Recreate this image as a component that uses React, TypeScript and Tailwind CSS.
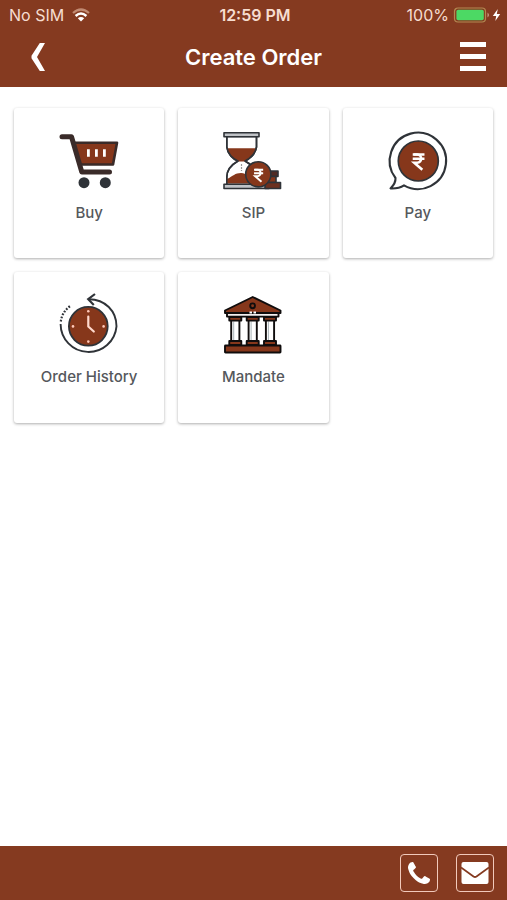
import type { ReactNode } from "react";

const RUST = "#853a20";
const INK = "#2f3338";
const SAND = "#86371b";

function CartIcon() {
  return (
    <svg viewBox="0 0 60 60" className="size-15 overflow-visible" aria-hidden="true">
      <path d="M15 11.8H58L54 33.5H20.5Z" fill={SAND} stroke="#3a2b29" strokeWidth="2.6" strokeLinejoin="round" />
      <path d="M3 5.8H12.5L22.8 41H50.5" fill="none" stroke="#3a2b29" strokeWidth="5" strokeLinecap="round" strokeLinejoin="round" />
      <path d="M29.4 18.3V25.8M37.4 18.3V25.8M45.4 18.3V25.8" stroke="#fff" strokeWidth="2.8" />
      <circle cx="25" cy="51.7" r="5.5" fill={INK} />
      <circle cx="46.3" cy="51.7" r="5.5" fill={INK} />
    </svg>
  );
}

function Rupee({ x, y, scale }: { x: number; y: number; scale: number }) {
  return (
    <g transform={`translate(${x} ${y}) scale(${scale})`} fill="none" stroke="#fff" strokeWidth="2.6">
      <path d="M-6-7.2H6M-6-2.8H6" />
      <path d="M-5-7.2H-1.5C4-7.2 4 1.2-1.5 1.2H-4.5L3.8 8.5" />
    </g>
  );
}

function HourglassIcon() {
  return (
    <svg viewBox="0 0 60 60" className="size-15 overflow-visible" aria-hidden="true">
      <g stroke={INK} strokeWidth="1.6" strokeLinejoin="round">
        <path d="M3.8 5.5V16C4.5 23 10 28 15 30C8 34 3.8 40 3.8 46V53.5H33.5V46C33.5 40 29 34 22 30C28 27 32.5 22 33.5 16V5.5Z" fill="#fff" />
        <path d="M3.9 17.3H33.4C32 24 27 28 21 30.5H16C10 28 5 24 3.9 17.3Z" fill={SAND} stroke="none" />
        <path d="M4 52.5V48C10 45 12 42 18 42C24 42 28 48 33 52.5Z" fill={SAND} stroke="none" />
        <path d="M18.5 33V40" stroke="#999" strokeWidth="1.2" strokeDasharray="2 1" />
        <path d="M3.8 5.5V16C4.5 23 10 28 15 30C8 34 3.8 40 3.8 46V53.5M33.5 5.5V16C32.5 22 28 27 22 30C25 31.5 27 33 29 35" fill="none" />
        <rect x="1" y="1.7" width="35" height="4" fill="#bfc2c6" />
        <rect x="1" y="53.3" width="45" height="4.2" fill="#bfc2c6" />
        <rect x="43" y="40" width="12" height="5.5" fill="#502b25" />
        <rect x="42" y="45.5" width="11" height="6" fill={SAND} />
        <rect x="42" y="51.5" width="15.5" height="6" fill="#6d301f" />
        <circle cx="35.3" cy="43.3" r="12.6" fill={SAND} />
      </g>
      <Rupee x={35.6} y={44.3} scale={0.76} />
    </svg>
  );
}

function PayIcon() {
  return (
    <svg viewBox="0 0 60 60" className="size-15 overflow-visible" aria-hidden="true">
      <path d="M7.5 47A28.2 28.2 0 1 1 16 54.4C12 57 7 57.6 2.5 57.4C6 54 7.8 51 7.5 47Z" fill="#fff" stroke={INK} strokeWidth="2.1" strokeLinejoin="round" />
      <circle cx="30.3" cy="30" r="20" fill={SAND} stroke={INK} strokeWidth="1.7" />
      <Rupee x={30.6} y={30.5} scale={0.98} />
    </svg>
  );
}

function HistoryIcon() {
  return (
    <svg viewBox="0 0 60 60" className="size-15 overflow-visible" aria-hidden="true">
      <g fill="none" stroke={INK} strokeWidth="1.9">
        <path d="M30 4.2C46 4.2 57.5 16 57.5 31.3A28 28 0 0 1 1.6 29" />
        <path d="M36 -1L29.2 4.2L34.8 10" strokeWidth="2.2" />
        <path d="M1.8 26.5C2.6 20 6 14.5 12 10.5" strokeWidth="2.2" strokeDasharray="1.8 1.5" />
      </g>
      <circle cx="29.3" cy="31.3" r="19.4" fill={SAND} stroke={INK} strokeWidth="1.8" />
      <path d="M29.3 21.5V31.5L34.8 36.5" fill="none" stroke="#ffd9cd" strokeWidth="2.2" strokeLinecap="round" strokeLinejoin="round" />
      <g fill="#ffc9ba">
        <circle cx="29.3" cy="16.3" r="1.3" />
        <circle cx="29.3" cy="46.6" r="1.3" />
        <circle cx="14" cy="31.4" r="1.3" />
        <circle cx="44.6" cy="31.4" r="1.3" />
      </g>
    </svg>
  );
}

function BankIcon() {
  return (
    <svg viewBox="0 0 60 60" className="size-15 overflow-visible" aria-hidden="true">
      <g stroke="#100d0d" strokeWidth="1.9" strokeLinejoin="round">
        <rect x="4" y="18" width="51.5" height="3.6" fill="#f3eeee" />
        <path d="M29.7 2L57.5 15.5V18H2V15.5Z" fill={SAND} />
        <circle cx="29.6" cy="10.8" r="2.4" fill={SAND} />
        {[6.3, 23.7, 41].map((x) => (
          <g key={x}>
            <rect x={x + 1.9} y="25" width="8.2" height="21" fill="#fff" />
            <path d={`M${x + 4.4} 26.5V45`} strokeWidth="1" stroke="#a9b4b8" />
            <rect x={x} y="22" width="12" height="3.6" fill={SAND} />
            <rect x={x} y="46" width="12" height="4" fill={SAND} />
          </g>
        ))}
        <rect x="2" y="50.5" width="55.5" height="7" rx="0.5" fill={SAND} />
      </g>
      <path d="M26.5 17.6H29M30.5 17.6H33" stroke="#fff" strokeWidth="2" />
    </svg>
  );
}

const tiles: { label: string; icon: ReactNode }[] = [
  { label: "Buy", icon: <CartIcon /> },
  { label: "SIP", icon: <HourglassIcon /> },
  { label: "Pay", icon: <PayIcon /> },
  { label: "Order History", icon: <HistoryIcon /> },
  { label: "Mandate", icon: <BankIcon /> },
];

function StatusBar() {
  return (
    <div className="grid h-[26px] grid-cols-[1fr_auto_1fr] items-center pt-1 pr-1.5 pl-[9px] text-base leading-5 text-[#f6ddd0]">
      <div className="flex items-center gap-2">
        <span>No SIM</span>
        <svg viewBox="0 0 18 14" className="h-3.5 w-4.5" aria-label="Wi-Fi">
          <path d="M1 5Q9-2 17 5" fill="none" stroke="#c18a72" strokeWidth="2.2" />
          <path d="M3.6 8Q9 3 14.4 8" fill="none" stroke="#fff" strokeWidth="2.4" />
          <path d="M5.8 10.2Q9 7.6 12.2 10.2L9 13.6Z" fill="#fff" />
        </svg>
      </div>
      <span className="font-semibold">12:59 PM</span>
      <div className="flex items-center justify-end gap-1">
        <span>100%</span>
        <svg viewBox="0 0 48 16" className="h-4 w-12" aria-label="Battery charging">
          <rect x="1.5" y="1" width="31" height="14" rx="3.5" fill="none" stroke="#b28a52" strokeWidth="1.2" />
          <rect x="3.4" y="2.8" width="27.4" height="10.4" rx="1.8" fill="#4cd964" />
          <path d="M34.5 5.5Q37.5 8 34.5 10.5Z" fill="#c99a84" />
          <path d="M44.8 2L39.8 9H43.2L42.3 14L47.2 7H43.8Z" fill="#fff" />
        </svg>
      </div>
    </div>
  );
}

export default function App() {
  return (
    <div className="flex min-h-screen flex-col bg-white font-['Inter',sans-serif]">
      <header className="bg-[#853a20] text-white">
        <StatusBar />
        <div className="grid h-[61px] grid-cols-[1fr_auto_1fr] items-center px-5">
          <button type="button" aria-label="Back" className="flex h-10 w-9 items-center justify-center">
            <svg viewBox="0 0 14 30" className="h-7.5 w-3.5">
              <path d="M8.8 1H14L6 15L14 29H8.8L0.5 16.2V13.8Z" fill="#fff" />
            </svg>
          </button>
          <h1 className="text-[22px] leading-7 font-semibold">Create Order</h1>
          <button type="button" aria-label="Menu" className="flex h-10 w-7 flex-col items-center justify-center gap-[7px] justify-self-end">
            <span className="h-[5px] w-[26px] bg-white" />
            <span className="h-[5px] w-[26px] bg-white" />
            <span className="h-[5px] w-[26px] bg-white" />
          </button>
        </div>
      </header>

      <main className="grid flex-1 grid-cols-3 content-start gap-x-3.5 gap-y-3.5 px-3.5 pt-[21px]">
        {tiles.map(({ label, icon }) => (
          <button
            key={label}
            type="button"
            className="flex aspect-square flex-col items-center rounded-[3px] bg-white pt-[23px] text-[15px] leading-5 font-medium text-[#55585c] shadow-[0_1px_3px_rgba(0,0,0,0.32)]"
          >
            {icon}
            <span className="mt-3">{label}</span>
          </button>
        ))}
      </main>

      <footer className="flex h-[54px] items-center justify-end gap-[18px] bg-[#853a20] px-[13px]">
        <button type="button" aria-label="Call" className="flex size-[38px] items-center justify-center rounded-[4px] border border-[#f1c9bb]">
          <svg viewBox="0 128 1408 1408" className="size-[22px]" fill="#fff">
            <path d="M1408 1240q0 27-10 70.5t-21 68.5q-21 50-122 106-94 51-186 51-27 0-52.5-3.5t-57.5-12.5-47.5-14.5-55.5-20.5-49-18q-98-35-175-83-128-79-264.5-215.5t-215.5-264.5q-48-77-83-175-3-9-18-49t-20.5-55.5-14.5-47.5-12.5-57.5-3.5-52.5q0-92 51-186 56-101 106-122 25-11 68.5-21t70.5-10q14 0 21 3 18 6 53 76 11 19 30 54t35 63.5 31 53.5q3 4 17.5 25t21.5 35.5 7 28.5q0 20-28.5 50t-62 55-62 53-28.5 46q0 9 5 22.5t8.5 20.5 14 24 11.5 19q76 137 174 235t235 174q2 1 19 11.5t24 14 20.5 8.5 22.5 5q18 0 46-28.5t53-62 55-62 50-28.5q14 0 28.5 7t35.5 21.5 25 17.5q25 15 53.5 31t63.5 35 54 30q70 35 76 53 3 7 3 21z" />
          </svg>
        </button>
        <button type="button" aria-label="Email" className="flex size-[38px] items-center justify-center rounded-[4px] border border-[#f1c9bb]">
          <svg viewBox="0 0 28 22" className="h-[22px] w-7">
            <rect x="0.5" width="27" height="22" rx="2" fill="#fff" />
            <path d="M0 5.5L12.5 14.5Q14 15.5 15.5 14.5L28 5.5" fill="none" stroke={RUST} strokeWidth="1.8" />
          </svg>
        </button>
      </footer>
    </div>
  );
}
